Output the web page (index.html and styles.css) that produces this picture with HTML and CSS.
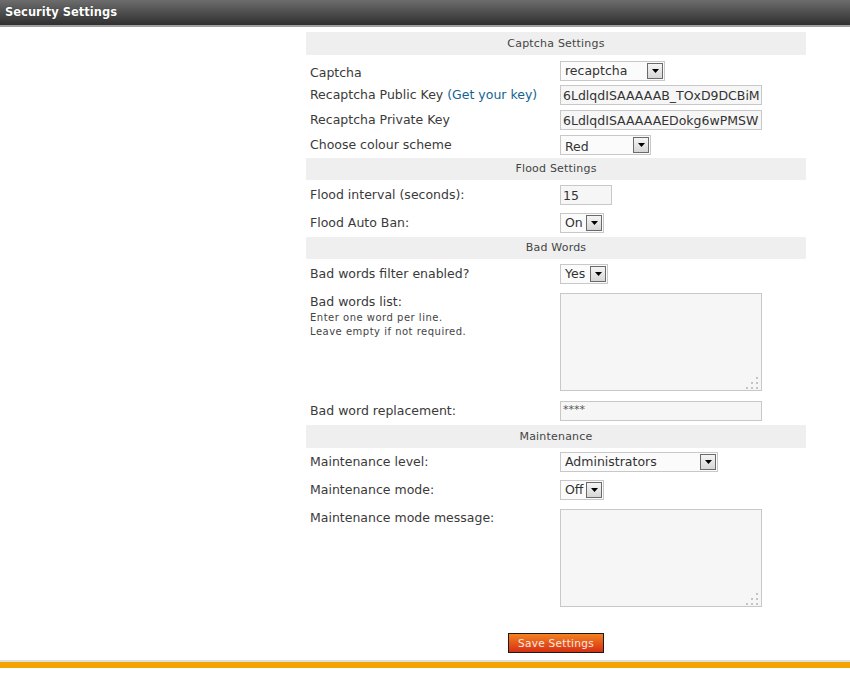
FILE: index.html
```html
<!DOCTYPE html>
<html lang="en">
<head>
<meta charset="utf-8">
<title>Security Settings</title>
<link rel="stylesheet" href="styles.css">
</head>
<body>
<header class="topbar"><h1 class="title">Security Settings</h1></header>
<main class="layout">
  <div class="side"></div>
  <form class="settings">
    <div class="section-head">Captcha Settings</div>
    <div class="row r-first">
      <label class="lbl lbl-low">Captcha</label>
      <div class="ctl"><div class="select w105"><span class="val">recaptcha</span><span class="arrow"><svg width="7" height="4" viewBox="0 0 7 4"><path d="M0 0H7L3.5 4Z" fill="#000"/></svg></span></div></div>
    </div>
    <div class="row r-tight">
      <label class="lbl">Recaptcha Public Key <a class="link" href="#">(Get your key)</a></label>
      <div class="ctl"><input class="txt w202" type="text" value="6LdlqdISAAAAAB_TOxD9DCBiMGXk2u3"></div>
    </div>
    <div class="row r-tight">
      <label class="lbl">Recaptcha Private Key</label>
      <div class="ctl"><input class="txt w202" type="text" value="6LdlqdISAAAAAEDokg6wPMSWFn7Xy"></div>
    </div>
    <div class="row r-last">
      <label class="lbl">Choose colour scheme</label>
      <div class="ctl"><div class="select w91"><span class="val val-low">Red</span><span class="arrow"><svg width="7" height="4" viewBox="0 0 7 4"><path d="M0 0H7L3.5 4Z" fill="#000"/></svg></span></div></div>
    </div>

    <div class="section-head short">Flood Settings</div>
    <div class="row">
      <label class="lbl">Flood interval (seconds):</label>
      <div class="ctl"><input class="txt w52" type="text" value="15"></div>
    </div>
    <div class="row r-m">
      <label class="lbl">Flood Auto Ban:</label>
      <div class="ctl"><div class="select w44"><span class="val">On</span><span class="arrow"><svg width="7" height="4" viewBox="0 0 7 4"><path d="M0 0H7L3.5 4Z" fill="#000"/></svg></span></div></div>
    </div>

    <div class="section-head short">Bad Words</div>
    <div class="row">
      <label class="lbl">Bad words filter enabled?</label>
      <div class="ctl"><div class="select w48"><span class="val">Yes</span><span class="arrow"><svg width="7" height="4" viewBox="0 0 7 4"><path d="M0 0H7L3.5 4Z" fill="#000"/></svg></span></div></div>
    </div>
    <div class="row top">
      <div class="lbl lbl-top">
        <label>Bad words list:</label>
        <p class="note">Enter one word per line.<br>Leave empty if not required.</p>
      </div>
      <div class="ctl"><div class="ta"><textarea class="area"></textarea><svg class="grip" width="14" height="14" viewBox="0 0 14 14"><g fill="#c4c4c4"><rect x="10" y="0" width="2" height="2"/><rect x="5" y="5" width="2" height="2"/><rect x="10" y="5" width="2" height="2"/><rect x="0" y="10" width="2" height="2"/><rect x="5" y="10" width="2" height="2"/><rect x="10" y="10" width="2" height="2"/></g></svg></div></div>
    </div>
    <div class="row">
      <label class="lbl">Bad word replacement:</label>
      <div class="ctl"><input class="txt w202 stars" type="text" value="****"></div>
    </div>

    <div class="section-head">Maintenance</div>
    <div class="row r-m">
      <label class="lbl">Maintenance level:</label>
      <div class="ctl"><div class="select w158"><span class="val">Administrators</span><span class="arrow"><svg width="7" height="4" viewBox="0 0 7 4"><path d="M0 0H7L3.5 4Z" fill="#000"/></svg></span></div></div>
    </div>
    <div class="row r-m">
      <label class="lbl">Maintenance mode:</label>
      <div class="ctl"><div class="select w44"><span class="val">Off</span><span class="arrow"><svg width="7" height="4" viewBox="0 0 7 4"><path d="M0 0H7L3.5 4Z" fill="#000"/></svg></span></div></div>
    </div>
    <div class="row top">
      <div class="lbl lbl-top"><label>Maintenance mode message:</label></div>
      <div class="ctl"><div class="ta"><textarea class="area"></textarea><svg class="grip" width="14" height="14" viewBox="0 0 14 14"><g fill="#c4c4c4"><rect x="10" y="0" width="2" height="2"/><rect x="5" y="5" width="2" height="2"/><rect x="10" y="5" width="2" height="2"/><rect x="0" y="10" width="2" height="2"/><rect x="5" y="10" width="2" height="2"/><rect x="10" y="10" width="2" height="2"/></g></svg></div></div>
    </div>

    <div class="actions"><button class="save" type="button">Save Settings</button></div>
  </form>
</main>
<footer class="foot"></footer>
</body>
</html>
```

FILE: styles.css
```css
* { box-sizing: border-box; }
html, body { margin: 0; padding: 0; background: #fff; }
body {
  font-family: "DejaVu Sans", Verdana, sans-serif;
  font-size: 12.5px;
  color: #3a3a3a;
  width: 850px;
  height: 674px;
  overflow: hidden;
}

.topbar {
  height: 27px;
  background: linear-gradient(#6d6d6d, #2f2f2f);
  border-bottom: 2px solid #a0a0a0;
}
.title {
  margin: 0;
  padding-left: 5px;
  line-height: 25px;
  font-size: 11.5px;
  font-weight: bold;
  color: #fff;
  text-shadow: 0 0 1px rgba(0,0,0,0.6);
}

.layout {
  display: grid;
  grid-template-columns: 306px 500px;
  padding-top: 5px;
}

.settings { width: 500px; }

.section-head {
  height: 23px;
  line-height: 23px;
  background: #efefef;
  text-align: center;
  font-size: 11px;
  letter-spacing: 0.2px;
  color: #444;
}
.section-head.short { height: 22px; line-height: 22px; }

.row {
  display: grid;
  grid-template-columns: 250px 1fr;
  align-items: center;
  padding: 5px 0 4px 4px;
}
.row.r-first { padding: 5px 0 1px 4px; }
.row.r-tight { padding: 3px 0 2px 4px; }
.row.r-last { padding: 3px 0 3px 4px; }
.row.r-m { padding: 4px 0 4px 4px; }
.row.top { align-items: start; padding: 5px 0 5px 4px; }

.lbl { line-height: 16px; white-space: nowrap; }
.lbl-low { padding-top: 5px; }
.lbl-top { padding-top: 1px; }
.lbl-top label { display: block; line-height: 16px; }
.note {
  margin: 1px 0 0;
  font-size: 10px;
  line-height: 14px;
  letter-spacing: 0.5px;
  color: #444;
}
.link { color: #14628f; text-decoration: none; }

.ctl { display: flex; }

.txt {
  height: 20px;
  border: 1px solid #c8c8c8;
  background: #f6f6f6;
  font-family: "DejaVu Sans", Verdana, sans-serif;
  font-size: 12.5px;
  color: #333;
  padding: 0 2px;
  margin: 0;
  outline: none;
}
.txt.stars { font-size: 11px; color: #555; padding-bottom: 3px; }
.w202 { width: 202px; }
.w52 { width: 52px; }

.select {
  display: flex;
  align-items: center;
  justify-content: space-between;
  height: 20px;
  border: 1px solid #c8c8c8;
  background: #fbfbfb;
  padding: 0 1px 0 4px;
  color: #333;
}
.val { line-height: 16px; }
.val-low { padding-top: 3px; }
.w105 { width: 105px; }
.w91 { width: 91px; }
.w44 { width: 44px; }
.w48 { width: 48px; }
.w158 { width: 158px; }

.arrow {
  width: 16px;
  height: 16px;
  border: 1px solid #6a6a6a;
  background: linear-gradient(#f5f5f5, #d6d6d6);
  display: flex;
  align-items: center;
  justify-content: center;
}
.arrow svg { display: block; }

.ta { position: relative; width: 202px; height: 98px; }
.area {
  display: block;
  width: 202px;
  height: 98px;
  margin: 0;
  border: 1px solid #c8c8c8;
  background: #f6f6f6;
  resize: none;
  outline: none;
}
.grip { position: absolute; right: 2px; bottom: 0px; }

.actions {
  display: flex;
  justify-content: center;
  padding-top: 21px;
}
.save {
  width: 96px;
  height: 20px;
  margin: 0;
  padding: 0;
  border: 1px solid #1a1a1a;
  background: linear-gradient(#f4821f, #d62f14);
  color: #fbe9e4;
  font-family: "DejaVu Sans", Verdana, sans-serif;
  font-size: 10.5px;
  letter-spacing: 0.3px;
  cursor: pointer;
}

.foot {
  margin-top: 7px;
  height: 8px;
  border-top: 2px solid #dedede;
  background: #f5a300;
}
```
